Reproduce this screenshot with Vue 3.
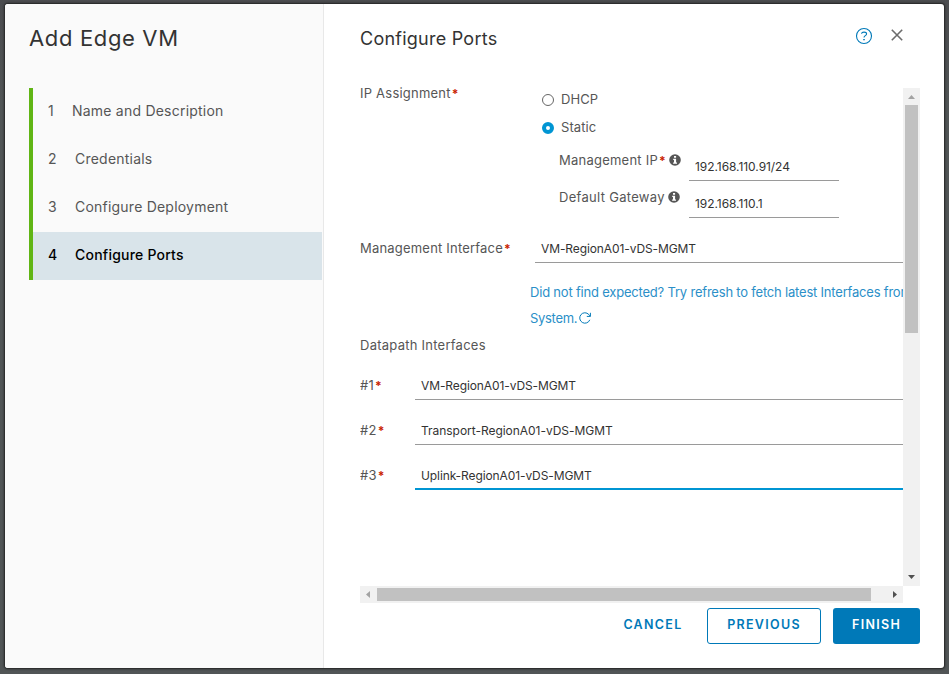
<script setup>
import { ref } from 'vue'

const steps = [
  { title: 'Name and Description', key: 'name' },
  { title: 'Credentials', key: 'credentials' },
  { title: 'Configure Deployment', key: 'deployment' },
  { title: 'Configure Ports', key: 'ports' },
]
const current = ref(3)
const assignment = ref('Static')
const addresses = [
  { label: 'Management IP', required: true, value: '192.168.110.91/24', key: 'ip' },
  { label: 'Default Gateway', required: false, value: '192.168.110.1', key: 'gateway' },
]
const datapaths = [
  { value: 'VM-RegionA01-vDS-MGMT', key: 'vm' },
  { value: 'Transport-RegionA01-vDS-MGMT', key: 'transport' },
  { value: 'Uplink-RegionA01-vDS-MGMT', key: 'uplink' },
]
</script>

<template>
  <div class="backdrop">
    <div class="modal">
      <aside class="sidebar">
        <h1 class="wizard-title">Add Edge VM</h1>
        <ol class="steps">
          <li v-for="(s, i) in steps" :key="s.key" class="step" :class="[s.key, { active: i === current }]">
            <span class="num">{{ i + 1 }}</span><span class="step-title">{{ s.title }}</span>
          </li>
        </ol>
      </aside>

      <main class="page">
        <header class="header">
          <h2 class="page-title">Configure Ports</h2>
          <svg class="help" viewBox="0 0 18 18">
            <circle cx="9" cy="9" r="7.5" />
            <path d="M6.4 6.6C6.8 5.4 7.9 5.1 9 5.1c1.5 0 2.6.7 2.6 1.9 0 1.7-2.6 1.6-2.6 3.5" />
            <path d="M8.2 12.6h1.6" />
          </svg>
          <svg class="close" viewBox="0 0 12 12"><path d="M.8 .8l10.4 10.4M11.2 .8L.8 11.2" /></svg>
        </header>

        <div class="scroller">
          <div class="view">
            <div class="assign">
              <div class="label assign-label">IP Assignment<b class="star">*</b></div>
              <div>
                <div v-for="o in ['DHCP', 'Static']" :key="o" class="radio" @click="assignment = o">
                  <i class="dot" :class="{ on: assignment === o }"></i><span class="option">{{ o }}</span>
                </div>
              </div>
            </div>
            <div v-for="a in addresses" :key="a.key" class="address">
              <div class="address-label">
                <span :class="'label-' + a.key">{{ a.label }}</span><b v-if="a.required" class="star">*</b>
                <svg class="info" viewBox="0 0 12 12">
                  <circle cx="6" cy="6" r="5.8" fill="#565656" />
                  <path d="M5 1.9h2.1v1.8H5zM4.2 4.7h2.9v3.8h.9v1.3H4.1V8.5H5V6h-.8z" fill="#fff" />
                </svg>
              </div>
              <div class="address-field">{{ a.value }}</div>
            </div>
            <div class="mgmt">
              <div class="label mgmt-label">Management Interface<b class="star">*</b></div>
              <div class="field vm">VM-RegionA01-vDS-MGMT</div>
            </div>
            <div class="hint">
              <div class="hint-first">Did not find expected? Try refresh to fetch latest Interfaces from</div>
              <div class="hint-second">
                <span>System.</span>
                <svg class="refresh" viewBox="0 0 12 12"><path d="M10.8 7.8A5.2 5.2 0 1 1 9.8 2.5L11.3 4.2M11.4 .8v3.6H7.8" /></svg>
              </div>
            </div>
            <div class="section">Datapath Interfaces</div>
            <div class="datapaths">
              <div v-for="(d, i) in datapaths" :key="d.key" class="datapath">
                <div class="label datapath-label">#{{ i + 1 }}<b class="star">*</b></div>
                <div class="field" :class="[d.key, { focused: i === 2 }]">{{ d.value }}</div>
              </div>
            </div>
          </div>
          <div class="vbar">
            <svg class="arrow" viewBox="0 0 17 17"><path d="M5 11h7L8.5 7z" fill="#a3a3a3" /></svg>
            <div class="vthumb"></div>
            <svg class="arrow end" viewBox="0 0 17 17"><path d="M5 6h7L8.5 10z" fill="#505050" /></svg>
          </div>
          <div class="hbar">
            <svg class="arrow" viewBox="0 0 17 17"><path d="M10 5v7L6 8.5z" fill="#a3a3a3" /></svg>
            <div class="hthumb"></div>
            <svg class="arrow end" viewBox="0 0 17 17"><path d="M7 5v7l4-3.5z" fill="#505050" /></svg>
          </div>
        </div>

        <footer class="footer">
          <button class="btn cancel">CANCEL</button>
          <button class="btn previous">PREVIOUS</button>
          <button class="btn finish">FINISH</button>
        </footer>
      </main>
    </div>
  </div>
</template>

<style>
body { margin: 0; overflow: hidden; }
</style>

<style scoped>
* { box-sizing: border-box; }
.backdrop {
  width: 949px; height: 674px; padding: 4px 5px 6px;
  background: linear-gradient(#4b4c4f, #515556 15%, #515556);
  font-family: Inter, "Liberation Sans", sans-serif; font-size: 13px; color: #565656;
  white-space: nowrap;
}
.modal {
  display: flex; width: 939px; height: 664px; background: #fff;
  border-radius: 3px; overflow: hidden; box-shadow: 0 0 2px 1px #222;
}
.sidebar { width: 319px; background: #fafafa; border-right: 1px solid #e8e8e8; padding: 17px 1px 0 24px; }
.wizard-title { margin: 0; font-size: 22px; line-height: 34px; font-weight: 400; color: #333; letter-spacing: .65px; }
.steps { list-style: none; margin: 33px 0 0; padding: 0; border-left: 4px solid #60b515; }
.step { display: flex; height: 48px; line-height: 46px; padding-left: 15px; font-size: 14px; letter-spacing: .22px; }
.num { width: 27px; }
.step.name .num { width: 24px; }
.step.active { background: #d9e4ea; color: #000; font-weight: 500; }
.page { flex: 1; min-width: 0; padding: 18px 24px 0 36px; }
.header { display: flex; height: 66px; }
.page-title { margin: 0; flex: 1; font-size: 18px; line-height: 34px; font-weight: 400; color: #333; letter-spacing: .24px; }
.help { width: 18px; height: 18px; margin: 5px 18px 0 0; fill: none; stroke: #0079b8; stroke-width: 1.1; }
.close { width: 12px; height: 12px; margin: 7px 17px 0 0; fill: none; stroke: #6c6c6c; stroke-width: 1.6; }
.scroller { display: grid; grid-template-columns: 543px 17px; grid-template-rows: 498px 17px; }
.view { overflow: hidden; margin-top: -4px; padding-top: 4px; }
.star { color: #c92100; font-size: 12px; font-weight: 700; margin-left: 1px; letter-spacing: 0; }
.assign { display: flex; }
.label { letter-spacing: .25px; line-height: 24px; }
.assign-label { width: 182px; line-height: 16px; margin-top: -3px; letter-spacing: .22px; }
.radio { display: flex; align-items: center; height: 24px; margin-bottom: 4px; }
.dot { width: 12px; height: 12px; margin-right: 7px; border: 1px solid #666; border-radius: 50%; }
.dot.on { border: 4px solid #0095d3; }
.option { margin-top: -2px; letter-spacing: .1px; }
.address { display: flex; height: 37px; padding-left: 199px; }
.address-label { display: flex; align-items: center; width: 130px; height: 32px; letter-spacing: .3px; }
.label-ip { letter-spacing: .23px; }
.info { width: 12px; height: 12px; margin-left: 3px; }
.address-field { width: 150px; padding: 10px 0 0 6px; line-height: 26px; border-bottom: 1px solid #9a9a9a; font-size: 12px; letter-spacing: -.06px; color: #333; }
.mgmt { display: flex; margin-top: 18px; }
.mgmt-label { width: 175px; letter-spacing: .2px; }
.field { flex: 1; height: 27px; line-height: 26px; padding-left: 6px; border-bottom: 1px solid #9a9a9a; font-size: 12px; letter-spacing: -.1px; color: #333; }
.field.transport { letter-spacing: -.03px; }
.field.focused { border-bottom: 2px solid #0095d3; }
.hint { margin: 16px 0 1px 170px; line-height: 26px; color: #2b8fc8; letter-spacing: -.12px; }
.hint-first { letter-spacing: -.2px; }
.hint-second { display: flex; align-items: center; gap: 2px; letter-spacing: -.3px; }
.refresh { width: 12px; height: 12px; fill: none; stroke: #0079b8; stroke-width: 1; }
.section { line-height: 26px; letter-spacing: .25px; }
.datapaths { display: grid; gap: 18px; margin-top: 15px; }
.datapath { display: flex; }
.datapath-label { width: 55px; }
.vbar, .hbar { display: flex; background: #f1f1f1; }
.vbar { flex-direction: column; align-items: center; }
.hbar { align-items: center; }
.arrow { width: 17px; height: 17px; flex: none; }
.vbar .end { margin-top: auto; }
.hbar .end { margin-left: auto; }
.vthumb { width: 13px; height: 228px; background: #c1c1c1; }
.hthumb { width: 494px; height: 13px; background: #c1c1c1; }
.footer { display: flex; justify-content: flex-end; margin-top: 5px; }
.btn {
  height: 36px; padding: 0 0 3px; border: 1px solid transparent; border-radius: 3px; background: none;
  font-family: inherit; font-size: 12.5px; font-weight: 600; letter-spacing: 1.3px; color: #0079b8;
}
.cancel { width: 84px; margin-right: 12px; }
.previous { width: 114px; border-color: #0079b8; margin-right: 12px; }
.finish { width: 87px; background: #0079b8; color: #fff; }
</style>
